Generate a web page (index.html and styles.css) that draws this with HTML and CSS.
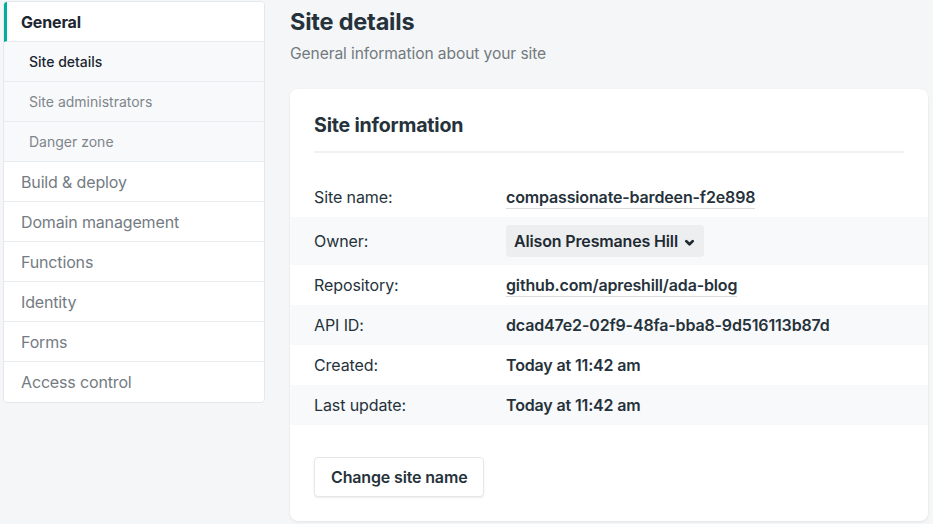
FILE: index.html
```html
<!DOCTYPE html>
<html lang="en">
<head>
<meta charset="utf-8">
<title>Site details</title>
<link rel="stylesheet" href="styles.css">
</head>
<body>
<div class="layout">
  <nav class="sidebar">
    <a class="nav-item active">General</a>
    <a class="nav-sub current">Site details</a>
    <a class="nav-sub">Site administrators</a>
    <a class="nav-sub">Danger zone</a>
    <a class="nav-item">Build &amp; deploy</a>
    <a class="nav-item">Domain management</a>
    <a class="nav-item">Functions</a>
    <a class="nav-item">Identity</a>
    <a class="nav-item">Forms</a>
    <a class="nav-item last">Access control</a>
  </nav>
  <main class="main">
    <h1 class="page-title">Site details</h1>
    <p class="page-sub">General information about your site</p>
    <section class="card">
      <h2 class="card-title">Site information</h2>
      <dl class="info">
        <div class="row"><dt>Site name:</dt><dd><span class="link">compassionate-bardeen-f2e898</span></dd></div>
        <div class="row alt tall"><dt>Owner:</dt><dd><button class="owner">Alison Presmanes Hill <svg class="chev" width="11" height="11" viewBox="0 0 12 12"><path d="M2.5 4.5 L6 8 L9.5 4.5" fill="none" stroke="#1f2a33" stroke-width="3" stroke-linecap="round" stroke-linejoin="round"/></svg></button></dd></div>
        <div class="row"><dt>Repository:</dt><dd><span class="link">github.com/apreshill/ada-blog</span></dd></div>
        <div class="row alt"><dt>API ID:</dt><dd>dcad47e2-02f9-48fa-bba8-9d516113b87d</dd></div>
        <div class="row"><dt>Created:</dt><dd>Today at 11:42 am</dd></div>
        <div class="row alt"><dt>Last update:</dt><dd>Today at 11:42 am</dd></div>
      </dl>
      <div class="actions">
        <button class="btn">Change site name</button>
      </div>
    </section>
  </main>
</div>
</body>
</html>
```
FILE: styles.css
```css
* { box-sizing: border-box; }
html, body { margin: 0; padding: 0; }
body {
  background: #f4f6f7;
  font-family: Inter, "Liberation Sans", Arial, sans-serif;
  color: #1f2a33;
  width: 933px;
  height: 524px;
  overflow: hidden;
}
.layout {
  display: flex;
  gap: 25px;
  padding: 1px 5px 0 3px;
  align-items: flex-start;
}
.sidebar {
  width: 262px;
  flex: none;
  display: flex;
  flex-direction: column;
  background: #fff;
  border: 1px solid #e6e9eb;
  border-radius: 4px;
  overflow: hidden;
}
.nav-item, .nav-sub {
  display: flex;
  align-items: center;
  height: 40px;
  border-bottom: 1px solid #e9ecee;
  font-size: 16px;
  color: #747b82;
  padding-left: 17px;
  letter-spacing: -0.15px;
}
.nav-item.last { border-bottom: none; }
.nav-item.active {
  color: #1b2630;
  font-weight: 700;
  border-left: 3px solid #00ad9f;
  padding-left: 14px;
  background: #fff;
}
.nav-sub {
  background: #f8f9fa;
  font-size: 14px;
  padding-left: 25px;
  color: #7e858c;
  letter-spacing: 0;
}
.nav-sub.current { color: #1b2630; font-weight: 500; }
.main { flex: 1; min-width: 0; }
.page-title {
  margin: 7px 0 0;
  font-size: 23.5px;
  font-weight: 700;
  line-height: 28px;
  color: #26323b;
  letter-spacing: -0.2px;
}
.page-sub {
  margin: 8px 0 0;
  font-size: 15.6px;
  line-height: 20px;
  color: #737a80;
  letter-spacing: -0.1px;
}
.card {
  margin-top: 25px;
  background: #fff;
  border-radius: 8px;
  box-shadow: 0 1px 3px rgba(0,0,0,0.08);
  padding: 24px 0 24px;
  height: 432px;
}
.card-title {
  margin: 0 24px;
  font-size: 19.6px;
  font-weight: 700;
  line-height: 24px;
  color: #26323b;
  padding-bottom: 14px;
  border-bottom: 2px solid #eff1f2;
  letter-spacing: -0.2px;
}
.info { margin: 24px 0 0; }
.row {
  display: flex;
  align-items: center;
  height: 40px;
  padding: 0 24px;
  font-size: 16px;
}
.row.tall { height: 48px; }
.row.alt { background: #f8f9fa; }
.row dt {
  width: 192px;
  flex: none;
  color: #26323b;
  letter-spacing: -0.1px;
}
.row dd {
  margin: 0;
  font-weight: 600;
  color: #26323b;
  letter-spacing: -0.15px;
}
.link {
  border-bottom: 1px solid #d8dcdf;
  padding-bottom: 1px;
}
.owner {
  font: inherit;
  font-weight: 600;
  color: #1f2a33;
  background: #eceef0;
  border: none;
  border-radius: 4px;
  height: 32px;
  padding: 0 9px 0 8px;
  display: flex;
  align-items: center;
  gap: 6px;
  letter-spacing: -0.15px;
}
.chev { display: block; margin-top: 2px; }
.actions { padding: 32px 24px 0; }
.btn {
  font: inherit;
  font-size: 16px;
  font-weight: 600;
  color: #26323b;
  background: #fff;
  border: 1px solid #e4e7ea;
  border-radius: 4px;
  height: 40px;
  padding: 0 16px;
  box-shadow: 0 1px 2px rgba(0,0,0,0.08);
  letter-spacing: -0.15px;
}
```
